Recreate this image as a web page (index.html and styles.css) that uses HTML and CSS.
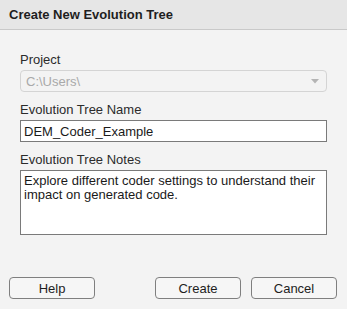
FILE: index.html
```html
<!DOCTYPE html>
<html lang="en">
<head>
    <meta charset="UTF-8">
    <meta name="viewport" content="width=device-width, initial-scale=1.0">
    <title>Create New Evolution Tree</title>
    <link rel="stylesheet" href="styles.css">
</head>
<body>
    <div class="dialog">
        <div class="title-bar">Create New Evolution Tree</div>

        <div class="form">
            <div class="field">
                <label class="field-label">Project</label>
                <div class="dropdown">
                    <span class="dropdown-text">C:\Users\</span>
                    <svg class="dropdown-arrow" width="8" height="5" viewBox="0 0 8 5">
                        <path d="M0 0 L8 0 L4 4.5 Z" fill="#b4b4b4"/>
                    </svg>
                </div>
            </div>
            <div class="field">
                <label class="field-label" for="tree-name">Evolution Tree Name</label>
                <input class="text-input" id="tree-name" type="text" value="DEM_Coder_Example">
            </div>
            <div class="field">
                <label class="field-label" for="tree-notes">Evolution Tree Notes</label>
                <textarea class="notes-input" id="tree-notes">Explore different coder settings to understand their impact on generated code.</textarea>
            </div>
        </div>

        <div class="button-row">
            <button class="btn">Help</button>
            <div class="button-group">
                <button class="btn">Create</button>
                <button class="btn">Cancel</button>
            </div>
        </div>
    </div>
</body>
</html>
```

FILE: styles.css
```css
body {
    margin: 0;
    padding: 0;
    font-family: 'Liberation Sans', Arial, sans-serif;
    font-size: 13px;
    background: #f3f3f3;
    color: #222;
}
.dialog {
    width: 347px;
    height: 309px;
    display: flex;
    flex-direction: column;
}
.title-bar {
    height: 29px;
    line-height: 29px;
    padding-left: 9px;
    background: #e6e6e6;
    border-bottom: 1px solid #c9c9c9;
    font-weight: 700;
    color: #1e1e1e;
}
.form {
    padding: 22px 20px 0 20px;
}
.field {
    margin-bottom: 10px;
}
.field-label {
    display: block;
    line-height: 16px;
    margin-bottom: 2px;
    color: #2b2b2b;
}
.dropdown {
    height: 20px;
    border: 1px solid #d4d4d4;
    border-radius: 4px;
    display: flex;
    align-items: center;
    justify-content: space-between;
    padding: 0 7px 0 5px;
    margin-top: 1px;
}
.dropdown-text {
    color: #a9a9a9;
}
.dropdown-arrow {
    display: block;
}
.text-input,
.notes-input {
    display: block;
    box-sizing: border-box;
    width: 100%;
    margin: 0;
    border: 1px solid #7a7a7a;
    border-radius: 0;
    background: #fff;
    font-family: inherit;
    font-size: 13px;
    color: #1a1a1a;
    outline: none;
}
.text-input {
    height: 22px;
    padding: 0 3px;
}
.notes-input {
    height: 65px;
    padding: 3px 3px;
    line-height: 14px;
    resize: none;
    overflow: hidden;
}
.button-row {
    margin-top: auto;
    margin-bottom: 10px;
    padding: 0 10px 0 9px;
    display: flex;
    justify-content: space-between;
}
.button-group {
    display: flex;
    gap: 10px;
}
.btn {
    width: 86px;
    height: 22px;
    padding: 0;
    border: 1px solid #7f7f7f;
    border-radius: 4px;
    background: #f6f6f6;
    font-family: inherit;
    font-size: 13px;
    color: #1e1e1e;
    cursor: pointer;
}
.btn:hover {
    background: #eaeaea;
}
```
